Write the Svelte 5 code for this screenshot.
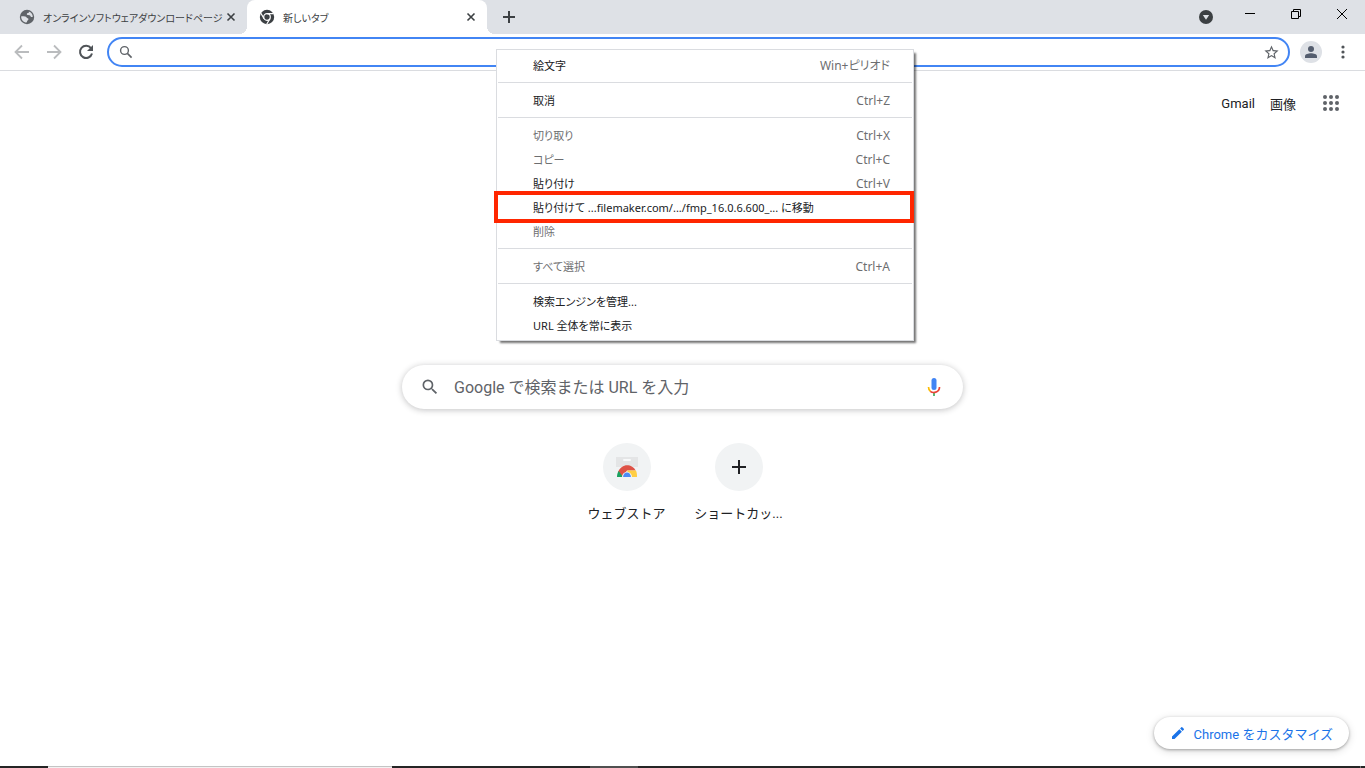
<script>
  let query = $state('');
  let address = $state('');

  const groups = [
    [{ label: '絵文字', keys: 'Win+ピリオド' }],
    [{ label: '取消', keys: 'Ctrl+Z' }],
    [
      { label: '切り取り', keys: 'Ctrl+X', disabled: true },
      { label: 'コピー', keys: 'Ctrl+C', disabled: true },
      { label: '貼り付け', keys: 'Ctrl+V' },
      { label: '貼り付けて ...filemaker.com/.../fmp_16.0.6.600_... に移動', marked: true },
      { label: '削除', disabled: true },
    ],
    [{ label: 'すべて選択', keys: 'Ctrl+A', disabled: true }],
    [{ label: '検索エンジンを管理...' }, { label: 'URL 全体を常に表示' }],
  ];

  const dots = [2, 8, 14];
</script>

<div class="window">
  <header class="strip">
    <div class="tab">
      <svg class="favicon" viewBox="0 0 16 16" width="16" height="16">
        <circle cx="8" cy="8" r="7.200" fill="#5f6368" />
        <path d="M2.200 7.200c1.600-.2 2.600.1 3.900.2 1.500.1 1.400 1.500 2.600 1.800 1.100.3.900 1.500.1 2-.8.500-.6 1.500-1.300 2.300C4.500 13.400 1.900 10.800 2.200 7.200z" fill="#dee1e6" />
        <path d="M9.800 2.500c.4.900-.1 1.400-.9 1.600-1 .3-1.400 1.100-.8 1.700.7.600 1.700.2 2.500.5.900.3.700 1.300 1.500 1.600.7.300 1.200-.1 1.700-.2C13.700 5.300 12.200 3.200 9.800 2.500z" fill="#dee1e6" />
      </svg>
      <span class="title">オンラインソフトウェアダウンロードページ</span>
      <button class="close" aria-label="タブを閉じる">
        <svg viewBox="0 0 10 10" width="10" height="10"><path d="M1.500 1.500l7 7M8.500 1.500l-7 7" stroke="#3c4043" stroke-width="1.600" /></svg>
      </button>
    </div>
    <div class="tab active">
      <svg class="favicon" viewBox="0 0 16 16" width="16" height="16">
        <circle cx="8" cy="8" r="7.200" fill="#3c4043" />
        <circle cx="8" cy="8" r="3.300" fill="#3c4043" stroke="#fff" stroke-width="1.200" />
        <path d="M8 4.700h6.500M5.100 9.700L1.900 4.200M10.900 9.700l-3.200 5.500" stroke="#fff" stroke-width="1.200" />
      </svg>
      <span class="title">新しいタブ</span>
      <button class="close" aria-label="タブを閉じる">
        <svg viewBox="0 0 10 10" width="10" height="10"><path d="M1.500 1.500l7 7M8.500 1.500l-7 7" stroke="#3c4043" stroke-width="1.600" /></svg>
      </button>
    </div>
    <button class="new-tab" aria-label="新しいタブ">
      <svg viewBox="0 0 12 12" width="12" height="12"><path d="M6 0v12M0 6h12" stroke="#3c4043" stroke-width="2" /></svg>
    </button>
    <div class="controls">
      <button class="search-tabs" aria-label="タブを検索">
        <svg viewBox="0 0 14 14" width="14" height="14">
          <circle cx="7" cy="7" r="7" fill="#3c4043" />
          <path d="M3.800 5h6.400L7 9.800z" fill="#dee1e6" />
        </svg>
      </button>
      <button aria-label="最小化">
        <svg viewBox="0 0 10 10" width="10" height="10"><path d="M0 4.500h10" stroke="#000" /></svg>
      </button>
      <button aria-label="元に戻す">
        <svg viewBox="0 0 10 10" width="10" height="10"><path d="M.5 2.500h7v7h-7zM2.500 2.500v-2h7v7h-2" fill="none" stroke="#000" /></svg>
      </button>
      <button aria-label="閉じる">
        <svg viewBox="0 0 10 10" width="10" height="10"><path d="M0 0l10 10M10 0L0 10" stroke="#000" /></svg>
      </button>
    </div>
  </header>

  <nav class="toolbar">
    <button aria-label="戻る">
      <svg viewBox="0 0 16 16" width="16" height="16"><path d="M15 8H2M8 1.500L1.500 8 8 14.500" fill="none" stroke="#babcbe" stroke-width="1.800" /></svg>
    </button>
    <button aria-label="進む">
      <svg viewBox="0 0 16 16" width="16" height="16"><path d="M1 8h13M8 1.500L14.500 8 8 14.500" fill="none" stroke="#babcbe" stroke-width="1.800" /></svg>
    </button>
    <button aria-label="再読み込み">
      <svg viewBox="0 0 16 16" width="16" height="16">
        <path d="M13 4.200A6.100 6.100 0 1 0 14 9.500" fill="none" stroke="#505458" stroke-width="2" />
        <path d="M15 1v6H9z" fill="#505458" />
      </svg>
    </button>
    <div class="omnibox">
      <svg viewBox="0 0 14 14" width="14" height="14">
        <circle cx="5.500" cy="5.500" r="3.900" fill="none" stroke="#5f6368" stroke-width="1.400" />
        <path d="M8.400 8.400l4.200 4.200" stroke="#5f6368" stroke-width="1.600" />
      </svg>
      <input type="text" aria-label="アドレス検索バー" bind:value={address} />
      <button aria-label="ブックマーク">
        <svg viewBox="0 0 24 24" width="17" height="17"><path fill="#5f6368" d="M22 9.240l-7.190-.620L12 2 9.190 8.630 2 9.240l5.460 4.730L5.820 21 12 17.270 18.180 21l-1.630-7.030L22 9.240zM12 15.400l-3.760 2.270 1-4.280-3.320-2.880 4.380-.380L12 6.100l1.710 4.040 4.380.380-3.320 2.880 1 4.280L12 15.400z" /></svg>
      </button>
    </div>
    <button class="profile" aria-label="プロフィール">
      <svg viewBox="0 0 12 12" width="12" height="12"><circle cx="6" cy="3" r="3" fill="#545d6e" /><path d="M0 12v-1.800C0 8.200 3.500 7.300 6 7.300s6 .9 6 2.900V12z" fill="#545d6e" /></svg>
    </button>
    <button class="more" aria-label="設定">
      <svg viewBox="0 0 4 14" width="4" height="14"><g fill="#505458"><circle cx="2" cy="2" r="1.600" /><circle cx="2" cy="7" r="1.600" /><circle cx="2" cy="12" r="1.600" /></g></svg>
    </button>
  </nav>

  <main>
    <div class="links">
      <a href="#gmail">Gmail</a>
      <a href="#images">画像</a>
      <button aria-label="Google アプリ">
        <svg viewBox="0 0 16 16" width="16" height="16">
          {#each dots as y}
            {#each dots as x}
              <circle cx={x} cy={y} r="2" fill="#5f6368" />
            {/each}
          {/each}
        </svg>
      </button>
    </div>

    <form class="search">
      <svg viewBox="0 0 24 24" width="20" height="20"><path fill="#5f6368" d="M15.500 14h-.790l-.280-.270A6.470 6.470 0 0 0 16 9.500 6.500 6.500 0 1 0 9.500 16c1.610 0 3.090-.590 4.230-1.570l.270.280v.790l5 4.990L20.490 19l-4.990-5zm-6 0C7.010 14 5 11.990 5 9.500S7.010 5 9.500 5 14 7.010 14 9.500 11.990 14 9.500 14z" /></svg>
      <input type="text" aria-label="検索" placeholder="Google で検索または URL を入力" bind:value={query} />
      <button type="button" aria-label="音声検索">
        <svg viewBox="0 0 14 20" width="14" height="20">
          <rect x="4.500" y="1" width="5" height="12" rx="2.500" fill="#4285f4" />
          <path d="M6.200 15h1.600v4H6.200z" fill="#34a853" />
          <path d="M1.500 10c0 2 .8 3.500 2 4.400" fill="none" stroke="#fbbc05" stroke-width="1.700" />
          <path d="M3.300 14.300c2.500 2.100 9.200 1.500 9.200-4.300" fill="none" stroke="#ea4335" stroke-width="1.700" />
        </svg>
      </button>
    </form>

    <div class="shortcuts">
      <a href="#webstore">
        <span class="circle">
          <svg viewBox="0 0 24 24" width="24" height="24">
            <path d="M1 2h22v10H1z" fill="#e4e5e6" />
            <rect x="8" y="4" width="8" height="2" rx="1" fill="#f8f9fa" />
            <path d="M3 17C5 12.500 8.500 10.200 12 10.200s7.200 2 8.700 5.300H12L7.500 22z" fill="#de5246" />
            <path d="M2 22c0-2.300.5-4.200 1.700-6L8 22z" fill="#1aa260" />
            <path d="M12 15.500h8.900c1 2 1.200 4.200 1.100 6.500h-7z" fill="#ffce44" />
            <path d="M7 22a5 5 0 0 1 10 0z" fill="#f4f4f4" />
            <path d="M8.100 22a3.900 4.600 0 0 1 7.800 0z" fill="#4c8bf5" />
          </svg>
        </span>
        <span class="name">ウェブストア</span>
      </a>
      <button>
        <span class="circle">
          <svg viewBox="0 0 14 14" width="14" height="14"><path d="M7 0v14M0 7h14" stroke="#202124" stroke-width="2" /></svg>
        </span>
        <span class="name">ショートカッ...</span>
      </button>
    </div>

    <button class="customize">
      <svg viewBox="0 0 24 24" width="16" height="16"><path fill="#1a73e8" d="M3 17.250V21h3.750L17.810 9.940l-3.750-3.750L3 17.250zM20.710 7.040a1 1 0 0 0 0-1.410l-2.340-2.340a1 1 0 0 0-1.410 0l-1.830 1.830 3.750 3.750 1.830-1.830z" /></svg>
      Chrome をカスタマイズ
    </button>
  </main>

  <div class="taskbar"><i class="field"></i><i class="app"></i><i class="desktop"></i></div>

  <div class="menu" role="menu">
    {#each groups as group, i}
      {#if i > 0}<hr />{/if}
      {#each group as item}
        <button class="item" class:marked={item.marked} role="menuitem" disabled={item.disabled}>
          <span>{item.label}</span>
          {#if item.keys}<span class="keys">{item.keys}</span>{/if}
        </button>
      {/each}
    {/each}
  </div>
</div>

<style>
  :global(body) {
    margin: 0;
    background: #fff;
  }

  .window {
    position: relative;
    display: flex;
    flex-direction: column;
    min-height: 100vh;
    overflow: hidden;
    color: #202124;
    font: 13px "Roboto", "Noto Sans CJK JP", sans-serif;
  }

  button {
    display: flex;
    align-items: center;
    justify-content: center;
    padding: 0;
    border: none;
    background: none;
    color: inherit;
    font: inherit;
  }

  svg {
    display: block;
    flex: none;
  }

  input {
    flex: 1;
    min-width: 0;
    padding: 0;
    border: none;
    outline: none;
    background: none;
    font: inherit;
  }

  a {
    color: inherit;
    text-decoration: none;
  }

  .strip {
    display: flex;
    height: 34px;
    background: #dee1e6;
  }

  .tab {
    position: relative;
    box-sizing: border-box;
    display: flex;
    align-items: center;
    width: 240px;
    padding: 0 8px 0 12px;
    color: #3c4043;
    font-size: 10px;
    font-feature-settings: "palt";
  }

  .tab:first-child {
    margin-left: 7px;
  }

  .tab.active {
    border-radius: 8px 8px 0 0;
    background: #fff;
  }

  .active::before,
  .active::after {
    content: "";
    position: absolute;
    bottom: 0;
    width: 8px;
    height: 8px;
  }

  .active::before {
    right: 100%;
    background: radial-gradient(circle at 0 0, transparent 8px, #fff 8px);
  }

  .active::after {
    left: 100%;
    background: radial-gradient(circle at 100% 0, transparent 8px, #fff 8px);
  }

  .title {
    flex: 1;
    margin-left: 8px;
    white-space: nowrap;
  }

  .close {
    width: 16px;
    height: 16px;
  }

  .new-tab {
    width: 28px;
    margin-left: 8px;
  }

  .controls {
    display: flex;
    align-items: flex-start;
    margin-left: auto;
  }

  .controls button {
    width: 46px;
    height: 28px;
  }

  .controls .search-tabs {
    width: 42px;
    height: 34px;
  }

  .toolbar {
    display: flex;
    align-items: center;
    gap: 4px;
    padding: 3px 8px;
    border-bottom: 1px solid #dadce0;
  }

  .toolbar > button {
    width: 28px;
    height: 28px;
  }

  .omnibox {
    box-sizing: border-box;
    display: flex;
    flex: 1;
    align-items: center;
    gap: 8px;
    height: 30px;
    margin: 0 6px 0 3px;
    padding: 0 8px 0 10px;
    border: 2px solid #4285f4;
    border-radius: 15px;
  }

  .toolbar .profile {
    width: 22px;
    height: 22px;
    border-radius: 50%;
    background: #dee1e6;
  }

  .toolbar .more {
    margin-left: 3px;
  }

  main {
    display: flex;
    flex: 1;
    flex-direction: column;
    align-items: center;
  }

  .links {
    display: flex;
    align-items: center;
    align-self: flex-end;
    gap: 15px;
    height: 64px;
    margin-right: 14px;
  }

  .links button {
    width: 40px;
    height: 40px;
  }

  .search {
    box-sizing: border-box;
    display: flex;
    align-items: center;
    width: 561px;
    max-width: 90%;
    height: 44px;
    margin: 230px 0 34px;
    padding: 0 22px 0 18px;
    border-radius: 22px;
    box-shadow: 0 1px 6px rgba(32, 33, 36, .28);
    font-size: 16px;
  }

  .search input {
    margin: 0 14px;
  }

  .search input::placeholder {
    color: #5f6368;
  }

  .shortcuts {
    display: flex;
  }

  .shortcuts a,
  .shortcuts button {
    display: flex;
    flex-direction: column;
    align-items: center;
    width: 112px;
  }

  .circle {
    display: flex;
    align-items: center;
    justify-content: center;
    width: 48px;
    height: 48px;
    border-radius: 50%;
    background: #f1f3f4;
  }

  .name {
    margin-top: 13px;
    line-height: 20px;
  }

  .customize {
    align-self: flex-end;
    gap: 8px;
    height: 32px;
    margin: auto 16px 17px;
    padding: 0 16px;
    border-radius: 16px;
    box-shadow: 0 1px 3px rgba(0, 0, 0, .3), 0 2px 8px rgba(0, 0, 0, .15);
    color: #1a73e8;
  }

  .taskbar {
    display: flex;
    height: 2px;
    padding: 0 4px 0 48px;
    background: #252525;
  }

  .field {
    width: 344px;
    background: linear-gradient(#c4c4c4 50%, #f2f2f2 50%);
  }

  .app {
    width: 48px;
    margin-left: 198px;
    background: #505050;
  }

  .desktop {
    width: 1px;
    margin-left: auto;
    background: #777;
  }

  .menu {
    position: absolute;
    top: 49px;
    left: 496px;
    box-sizing: border-box;
    width: 418px;
    padding: 3px 1px;
    border: 1px solid #dadce0;
    background: #fff;
    box-shadow: 3px 3px 2px -1px rgba(0, 0, 0, .55);
    font: 11px "Noto Sans", "Noto Sans CJK JP", sans-serif;
    font-feature-settings: "palt";
  }

  .menu hr {
    height: 1px;
    margin: 5px 0;
    border: none;
    background: #dadce0;
  }

  .item {
    justify-content: space-between;
    width: 100%;
    height: 24px;
    padding: 0 22px 0 35px;
    white-space: nowrap;
  }

  .item:disabled,
  .keys {
    color: #6d6e70;
  }

  .keys {
    font-size: 12px;
  }

  .marked {
    width: calc(100% - 2px);
    outline: 4px solid #ff2600;
  }
</style>
